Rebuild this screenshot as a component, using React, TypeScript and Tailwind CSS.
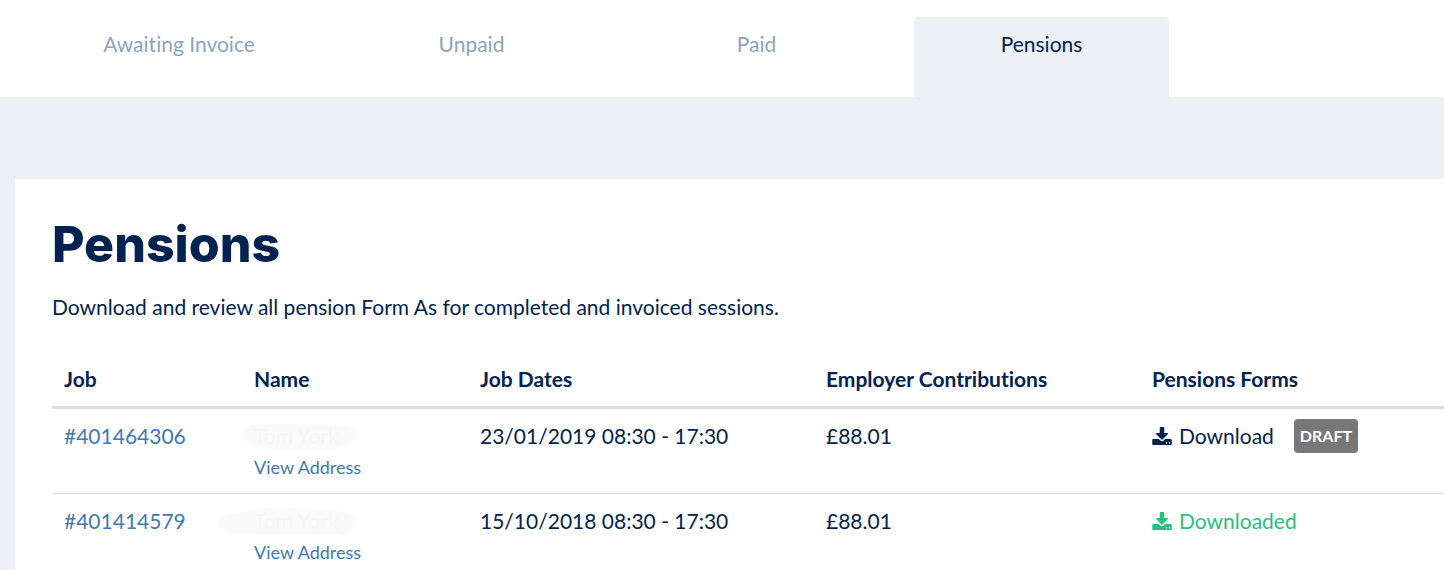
import React, { useState } from 'react';

interface Pension {
  job: string;
  name: string;
  dates: string;
  contribution: string;
  downloaded: boolean;
  smudge: string;
}

const tabs = ['Awaiting Invoice', 'Unpaid', 'Paid', 'Pensions'];

const pensions: Pension[] = [
  {
    job: '#401464306',
    name: 'Tom York',
    dates: '23/01/2019 08:30 - 17:30',
    contribution: '£88.01',
    downloaded: false,
    smudge: 'M12 3Q2 6 2 14T14 26Q24 29 50 29H88Q100 29 106 24Q119 21 118 14T104 5Q60 1 12 3Z',
  },
  {
    job: '#401414579',
    name: 'Tom York',
    dates: '15/10/2018 08:30 - 17:30',
    contribution: '£88.01',
    downloaded: true,
    smudge: 'M4 6Q-22 8 -22 16T-8 28H104Q116 25 115 15T104 5Q60 0 20 2Q8 2 4 6Z',
  },
];

function DownloadIcon() {
  return (
    <svg viewBox="0 0 1664 1536" className="h-[18px] w-5 shrink-0" fill="currentColor" aria-hidden="true">
      <path d="M1280 1344q0-26-19-45t-45-19-45 19-19 45 19 45 45 19 45-19 19-45zm256 0q0-26-19-45t-45-19-45 19-19 45 19 45 45 19 45-19 19-45zm128-224v320q0 40-28 68t-68 28h-1472q-40 0-68-28t-28-68v-320q0-40 28-68t68-28h465l135 136q58 56 136 56t136-56l136-136h464q40 0 68 28t28 68zm-325-569q17 41-14 70l-448 448q-18 19-45 19t-45-19l-448-448q-31-29-14-70 17-39 59-39h256v-448q0-26 19-45t45-19h256q26 0 45 19t19 45v448h256q42 0 59 39z" />
    </svg>
  );
}

function App() {
  const [active, setActive] = useState('Pensions');

  return (
    <div className="min-h-screen bg-[#edf0f5] font-['Lato',sans-serif] text-[21px] leading-[30px] text-[#02234f] [font-variant-ligatures:none]">
      <nav className="grid grid-cols-[270fr_255fr_255fr_255fr] gap-[30px] bg-white pt-[17px] pl-11 pr-[275px]">
        {tabs.map(tab => (
          <button
            key={tab}
            type="button"
            onClick={() => setActive(tab)}
            className={`h-20 rounded-t pb-[26px] ${active === tab ? 'bg-[#edf0f5]' : 'text-[#8ba5bd]'}`}
          >
            {tab}
          </button>
        ))}
      </nav>

      <main className="mt-[82px] ml-[15px] bg-white pt-[35px] pb-10 pl-[37px]">
        <h1 className="font-['Inter',sans-serif] text-[50px] font-extrabold leading-[60px]">Pensions</h1>
        <p className="mt-[18px]">Download and review all pension Form As for completed and invoiced sessions.</p>

        <table className="mt-[34px] w-full table-fixed text-left">
          <thead>
            <tr className="border-b-[3px] border-[#dddddd]">
              <th className="w-[190px] px-3 pt-2 pb-3 font-bold">Job</th>
              <th className="w-[226px] px-3 pt-2 pb-3 font-bold">Name</th>
              <th className="w-[346px] px-3 pt-2 pb-3 font-bold">Job Dates</th>
              <th className="w-[326px] px-3 pt-2 pb-3 font-bold">Employer Contributions</th>
              <th className="px-3 pt-2 pb-3 font-bold">Pensions Forms</th>
            </tr>
          </thead>
          <tbody>
            {pensions.map(pension => (
              <tr key={pension.job} className="border-b border-[#dddddd] align-top">
                <td className="px-3 pt-3 pb-[10px]">
                  <a href="#" className="text-[#4079b3]">{pension.job}</a>
                </td>
                <td className="px-3 pt-3 pb-[10px]">
                  <div className="relative">
                    <svg
                      viewBox="0 0 120 30"
                      className="absolute top-0 -left-3.5 h-[30px] w-[120px] overflow-visible blur-[1px]"
                      fill="#fafafa"
                      aria-hidden="true"
                    >
                      <path d={pension.smudge} />
                    </svg>
                    <span className="relative text-[#f6f6f6]">{pension.name}</span>
                  </div>
                  <a href="#" className="block text-[18px] leading-8 text-[#4079b3]">View Address</a>
                </td>
                <td className="px-3 pt-3 pb-[10px]">{pension.dates}</td>
                <td className="px-3 pt-3 pb-[10px]">{pension.contribution}</td>
                <td className="px-3 pt-3 pb-[10px]">
                  <div className="flex h-[30px] items-center">
                    <a
                      href="#"
                      className={`flex items-center gap-[7px] ${pension.downloaded ? 'text-[#2dbd7f]' : ''}`}
                    >
                      <DownloadIcon />
                      {pension.downloaded ? 'Downloaded' : 'Download'}
                    </a>
                    {!pension.downloaded && (
                      <span className="ml-5 rounded bg-[#777777] px-1.5 py-[2px] text-[16px] font-bold text-white">
                        DRAFT
                      </span>
                    )}
                  </div>
                </td>
              </tr>
            ))}
          </tbody>
        </table>
      </main>
    </div>
  );
}

export default App;
